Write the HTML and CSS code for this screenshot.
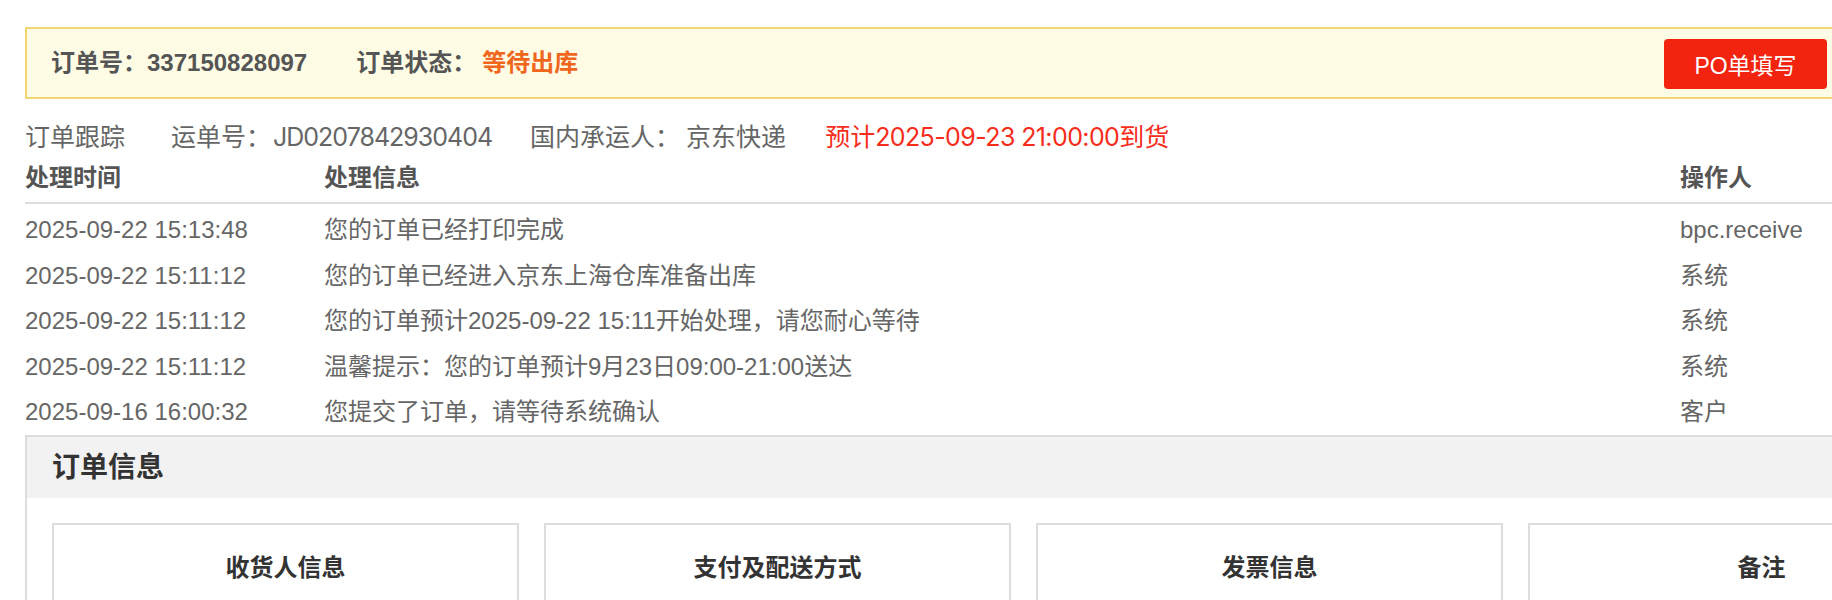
FILE: index.html
```html
<!DOCTYPE html>
<html lang="zh-CN">
<head>
<meta charset="utf-8">
<title>订单详情</title>
<link rel="stylesheet" href="styles.css">
</head>
<body>
<div class="page">
  <div class="order-bar">
    <div class="order-meta">
      <span class="meta-label">订单号：</span><span class="meta-num">337150828097</span>
      <span class="meta-label status-label">订单状态：</span><span class="status">等待出库</span>
    </div>
    <button class="po-btn" type="button">PO单填写</button>
  </div>

  <div class="track-line">
    <span class="track-title">订单跟踪</span>
    <span class="track-waybill">运单号：<span class="waybill-no">JD0207842930404</span></span>
    <span class="track-carrier">国内承运人：<span class="carrier-name">京东快递</span></span>
    <span class="track-eta">预计<span class="eta-time">2025-09-23 21:00:00</span>到货</span>
  </div>

  <div class="track-table">
    <div class="tr th">
      <div class="c-time">处理时间</div>
      <div class="c-msg">处理信息</div>
      <div class="c-op">操作人</div>
    </div>
    <div class="tbody">
      <div class="tr">
        <div class="c-time">2025-09-22 15:13:48</div>
        <div class="c-msg">您的订单已经打印完成</div>
        <div class="c-op">bpc.receive</div>
      </div>
      <div class="tr">
        <div class="c-time">2025-09-22 15:11:12</div>
        <div class="c-msg">您的订单已经进入京东上海仓库准备出库</div>
        <div class="c-op">系统</div>
      </div>
      <div class="tr">
        <div class="c-time">2025-09-22 15:11:12</div>
        <div class="c-msg">您的订单预计2025-09-22 15:11开始处理，请您耐心等待</div>
        <div class="c-op">系统</div>
      </div>
      <div class="tr">
        <div class="c-time">2025-09-22 15:11:12</div>
        <div class="c-msg">温馨提示：您的订单预计9月23日09:00-21:00送达</div>
        <div class="c-op">系统</div>
      </div>
      <div class="tr">
        <div class="c-time">2025-09-16 16:00:32</div>
        <div class="c-msg">您提交了订单，请等待系统确认</div>
        <div class="c-op">客户</div>
      </div>
    </div>
  </div>

  <section class="order-info">
    <div class="oi-head">订单信息</div>
    <div class="oi-cards">
      <div class="oi-card"><div class="oi-card-title">收货人信息</div></div>
      <div class="oi-card"><div class="oi-card-title">支付及配送方式</div></div>
      <div class="oi-card"><div class="oi-card-title">发票信息</div></div>
      <div class="oi-card"><div class="oi-card-title">备注</div></div>
    </div>
  </section>
</div>
</body>
</html>
```

FILE: styles.css
```css
html, body {
  margin: 0;
  padding: 0;
  background: #fff;
  overflow: hidden;
}

body {
  font-family: "Liberation Sans", "Noto Sans CJK SC", sans-serif;
  color: #666;
  font-size: 24px;
}

.page {
  width: 1816px;
  padding: 27px 0 0 25px;
}

/* top status bar */
.order-bar {
  height: 68px;
  border: 2px solid #f1d571;
  background: #fffce6;
  display: flex;
  align-items: center;
  justify-content: space-between;
  padding: 0 12px 0 24px;
}

.order-meta {
  display: flex;
  align-items: center;
  font-weight: bold;
  color: #555;
  font-size: 24px;
  line-height: 30px;
}

.status-label {
  margin-left: 49px;
}

.status {
  color: #f0661d;
  font-weight: bold;
  margin-left: 6px;
}

.po-btn {
  width: 163px;
  height: 50px;
  border: 0;
  border-radius: 4px;
  background: #f2230f;
  color: #fff;
  font-family: "Liberation Sans", "Noto Sans CJK SC", sans-serif;
  font-size: 23px;
  padding: 0;
  margin-top: 2px;
}

/* tracking line */
.track-line {
  margin-top: 21px;
  height: 34px;
  line-height: 34px;
  display: flex;
  white-space: nowrap;
  font-size: 25px;
}

.track-title {
  margin-right: 46px;
}

.waybill-no {
  font-family: "Inter", "Noto Sans CJK SC", sans-serif;
  letter-spacing: -1px;
  margin-left: 2px;
}

.track-waybill {
  margin-right: 38px;
}

.carrier-name {
  margin-left: 6px;
}

.track-carrier {
  margin-right: 39px;
}

.track-eta {
  color: #f72d1c;
}

.eta-time {
  font-family: "Inter", "Noto Sans CJK SC", sans-serif;
  letter-spacing: -0.6px;
}

/* tracking table */
.track-table {
  width: 100%;
}

.tr {
  display: grid;
  grid-template-columns: 299px 1356px 1fr;
  height: 45.6px;
  line-height: 45.6px;
  white-space: nowrap;
}

.th {
  height: 48px;
  line-height: 48px;
  font-weight: bold;
  color: #555;
  border-bottom: 2px solid #ddd;
}

.tbody {
  padding-top: 3px;
}

/* order info */
.order-info {
  border: 2px solid #ddd;
  overflow: hidden;
}

.oi-head {
  height: 61px;
  line-height: 61px;
  background: #f2f2f2;
  padding-left: 25px;
  font-size: 28px;
  font-weight: bold;
  color: #333;
}

.oi-cards {
  display: flex;
  gap: 25px;
  padding: 25px;
}

.oi-card {
  flex: 0 0 467px;
  box-sizing: border-box;
  height: 260px;
  border: 2px solid #ddd;
  padding-top: 26px;
}

.oi-card-title {
  text-align: center;
  font-weight: bold;
  color: #333;
  font-size: 24px;
  line-height: 34px;
}
```
